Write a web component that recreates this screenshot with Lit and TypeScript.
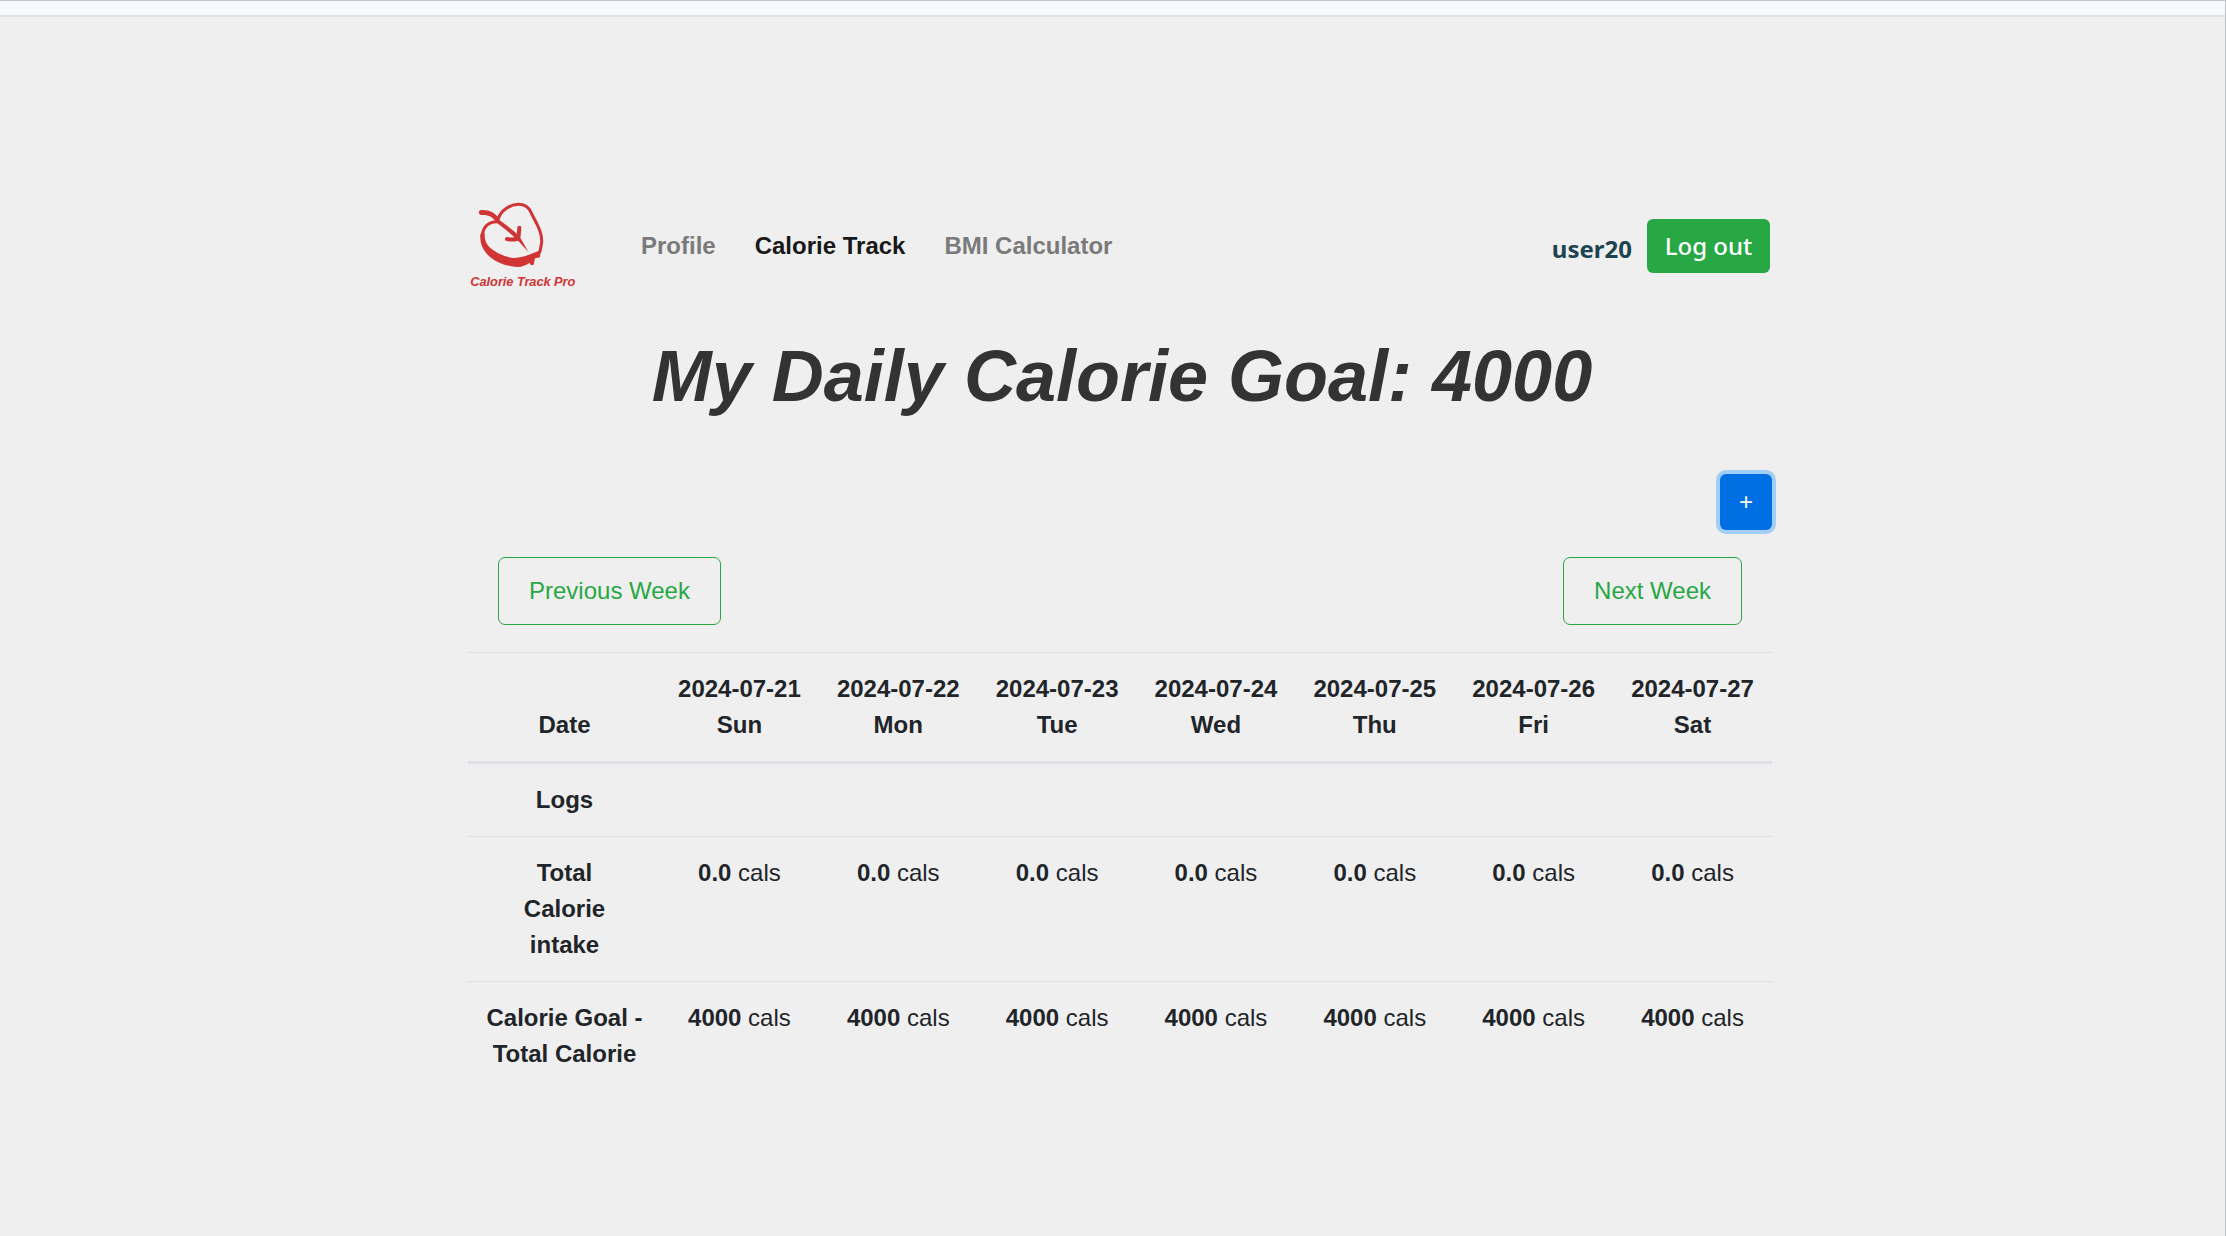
import { LitElement, html, css } from "lit";
import { customElement } from "lit/decorators.js";

interface Day {
  date: string;
  name: string;
  intake: string;
  left: string;
}

const DAYS: Day[] = ["Sun", "Mon", "Tue", "Wed", "Thu", "Fri", "Sat"].map((name, i) => ({
  date: `2024-07-${21 + i}`,
  name,
  intake: "0.0",
  left: "4000",
}));

@customElement("app-logo")
class AppLogo extends LitElement {
  static styles = css`
    :host { display: block; width: 110px; height: 90px; }
    .art { display: block; }
    .name { font: italic bold 38.4px "Liberation Sans", Arial, sans-serif; fill: #d03434; }
    .line { fill: none; stroke: #d03434; stroke-linecap: round; stroke-linejoin: round; }
    .shape { fill: #d03434; }
  `;

  render() {
    return html`
      <svg class="art" width="110" height="90" viewBox="24 30 330 270" aria-label="Calorie Track Pro">
        <!-- stem -->
        <path class="shape" d="M64 60 C88 59 104 68 117 84 L120 94 L108 97 C98 80 87 74 64 75 C54 74 54 61 64 60 Z"/>
        <!-- right half outline -->
        <path class="line" stroke-width="9" d="M115 86 C122 62 150 43 176 43 C194 43 206 52 213 67 C219 81 227 93 233 107 C242 126 246 140 245 156 C244 167 242 175 239 187"/>
        <!-- left half outline and shaded base -->
        <path class="line" stroke-width="9" d="M112 95 C88 94 68 110 67 138"/>
        <path class="shape" d="M61 132 L74 128 C73 148 78 162 88 171 C102 184 132 202 162 204 C190 203 214 191 242 181 L240 202 L225 205 L221 224 L213 226 L209 219 C198 225 186 231 173 231 C140 229 112 218 93 203 C70 185 59 162 61 132 Z"/>
        <!-- core line and seeds -->
        <path class="shape" d="M111 90 L118 90 C142 109 166 123 182 145 L205 186 L173 151 C156 133 134 116 110 98 Z"/>
        <path class="line" stroke-width="12" d="M178 113 L176 138 M141 147 C151 149 162 149 171 147"/>
        <text class="name" x="31" y="287" textLength="315">Calorie Track Pro</text>
      </svg>
    `;
  }
}

@customElement("app-root")
class AppRoot extends LitElement {
  static styles = css`
    :host {
      display: flex;
      flex-direction: column;
      box-sizing: border-box;
      height: 1236px;
      background: #efefef;
      border-top: 1px solid #c4c5cd;
      border-right: 1px solid #c0c0c8;
      color: #212529;
      font: 24px/36px "Liberation Sans", Arial, sans-serif;
    }
    .strip { height: 14px; background: #f8f9ff; border-bottom: 2px solid #dee2ea; }
    .page { width: 1304px; margin-left: 468px; padding-top: 183px; }
    .bar { display: flex; align-items: flex-start; height: 90px; }
    .links { display: flex; gap: 39px; margin: 28px 0 0 63px; font-weight: bold; }
    .link { color: #7a7a7a; }
    .active { color: #181818; }
    .account {
      display: flex;
      align-items: flex-start;
      gap: 15px;
      margin: 19px 2px 0 auto;
      font-family: "Noto Sans", sans-serif;
    }
    .user { margin-top: 12px; font-weight: 700; color: #1d4350; }
    button { font: inherit; margin: 0; box-sizing: border-box; white-space: nowrap; }
    .logout {
      width: 123px; height: 54px; padding: 0;
      border: 0; border-radius: 6px;
      background: #28a745; color: #fff; font-weight: 500;
    }
    .title {
      margin: 43px 0 0; padding-left: 4px;
      font-size: 72px; line-height: 86px; font-style: italic; font-weight: bold;
      color: #333; text-align: center; white-space: nowrap;
    }
    .tools { display: flex; justify-content: flex-end; margin-top: 55px; }
    .add {
      width: 52px; height: 56px; padding: 0;
      border: 0; border-radius: 6px;
      background: #006fe3; color: #fff;
      box-shadow: 0 0 0 4px #a2cdf5;
    }
    .weeks { display: flex; justify-content: space-between; padding: 27px 30px; }
    .week {
      height: 68px; padding: 15px 30px;
      border: 1px solid #28a745; border-radius: 7px;
      background: transparent; color: #28a745;
    }
    .log { width: 1304px; table-layout: fixed; border-collapse: separate; border-spacing: 0; }
    .log th, .log td { padding: 18px 0; border-top: 1px solid #dee2e6; text-align: center; vertical-align: top; }
    .log .head { border-bottom: 3px solid #dee2e6; vertical-align: bottom; }
    .log .first { width: 192px; padding-left: 1px; box-sizing: border-box; }
    .log .flush { border-top: 0; }
  `;

  render() {
    return html`
      <div class="strip"></div>
      <main class="page">
        <nav class="bar">
          <app-logo></app-logo>
          <div class="links">
            <span class="link">Profile</span>
            <span class="link active">Calorie Track</span>
            <span class="link">BMI Calculator</span>
          </div>
          <div class="account">
            <span class="user">user20</span>
            <button class="logout">Log out</button>
          </div>
        </nav>
        <h1 class="title">My Daily Calorie Goal: 4000</h1>
        <div class="tools"><button class="add">+</button></div>
        <div class="weeks">
          <button class="week">Previous Week</button>
          <button class="week">Next Week</button>
        </div>
        <table class="log">
          <tr>
            <th class="head first">Date</th>
            ${DAYS.map((d) => html`<th class="head">${d.date}<br />${d.name}</th>`)}
          </tr>
          <tr>
            <th class="first flush">Logs</th>
            ${DAYS.map(() => html`<td class="flush"></td>`)}
          </tr>
          <tr>
            <th class="first">Total<br />Calorie<br />intake</th>
            ${DAYS.map((d) => html`<td><b>${d.intake}</b> cals</td>`)}
          </tr>
          <tr>
            <th class="first">Calorie Goal -<br />Total Calorie</th>
            ${DAYS.map((d) => html`<td><b>${d.left}</b> cals</td>`)}
          </tr>
        </table>
      </main>
    `;
  }
}
